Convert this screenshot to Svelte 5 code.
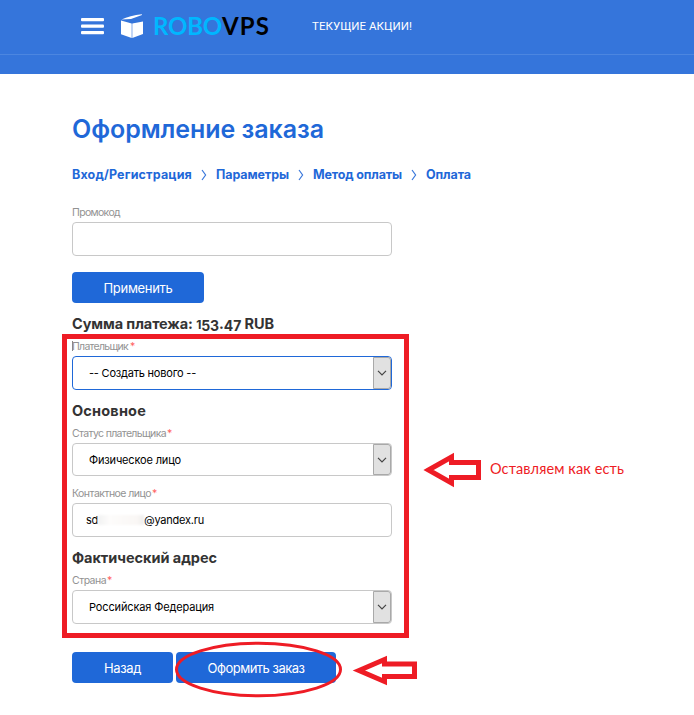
<script>
  // Spreads or tightens letters so a caption occupies its design width.
  function fit(node, width) {
    const gaps = node.textContent.length;
    const natural = node.getBoundingClientRect().width;
    node.style.letterSpacing = `${(width - natural) / gaps}px`;
  }
</script>

{#snippet select(text, width, active, height)}
  <div class="field select" class:active style:height="{height}px">
    <span class="value" use:fit={width}>{text}</span>
    <span class="drop">
      <svg width="10" height="6" viewBox="0 0 10 6"><path d="M1 .8 5 4.8 9 .8" fill="none" stroke="#444" stroke-width="1.2" /></svg>
    </span>
  </div>
{/snippet}

{#snippet label(text, width, gap)}
  <div class="label"><span use:fit={width}>{text}</span><b style:margin-left="{gap}px">*</b></div>
{/snippet}

{#snippet chevron()}
  <svg class="sep" width="6" height="12" viewBox="0 0 6 12"><path d="M1 1 4.6 6 1 11" fill="none" stroke="#3977db" stroke-width="1.2" /></svg>
{/snippet}

<div class="page">
  <header>
    <div class="bar">
      <svg class="burger" width="23" height="17" viewBox="0 0 23 17" fill="#fff">
        <rect y="0" width="23" height="3.2" rx="1" /><rect y="6.5" width="23" height="3.2" rx="1" /><rect y="13" width="23" height="3.2" rx="1" />
      </svg>
      <svg class="cube" width="22" height="25" viewBox="0 0 22 25" fill="#fff">
        <path d="M0 6.5 10.7 9.5V24L0 20.300ZM11.300 9.500 22 7.500V20L11.300 24ZM.5 5.500C6 3 13 .8 20.800.2L21 1 10 5Z" />
      </svg>
      <div class="logo"><span use:fit={69}>ROBO</span><span class="dark" use:fit={48}>VPS</span></div>
      <span class="promo" use:fit={100}>ТЕКУЩИЕ АКЦИИ!</span>
    </div>
  </header>

  <main>
    <h1><span use:fit={252}>Оформление заказа</span></h1>
    <nav>
      <span use:fit={120}>Вход/Регистрация</span>{@render chevron()}
      <span use:fit={73}>Параметры</span>{@render chevron()}
      <span use:fit={89}>Метод оплаты</span>{@render chevron()}
      <span use:fit={45}>Оплата</span>
    </nav>
    <div class="label"><span use:fit={48}>Промокод</span></div>
    <div class="field"></div>
    <button class="apply"><span use:fit={69}>Применить</span></button>
    <h2><span use:fit={202}>Сумма платежа: <span class="one">1</span><i>53</i>.<i>47</i> RUB</span></h2>

    <div class="group payer">
      {@render label('Плательщик', 56, 2)}
      {@render select('-- Создать нового --', 107, true, 34)}
    </div>
    <h2><span use:fit={74}>Основное</span></h2>
    <div class="group status">
      {@render label('Статус плательщика', 94, 1)}
      {@render select('Физическое лицо', 92, false, 33)}
    </div>
    <div class="group contact">
      {@render label('Контактное лицо', 79, 1)}
      <div class="field mail"><span use:fit={12}>sd</span><span class="smudge"></span><span use:fit={60}>@yandex.ru</span></div>
    </div>
    <h2 class="address"><span use:fit={145}>Фактический адрес</span></h2>
    <div class="group">
      {@render label('Страна', 34, 1)}
      {@render select('Российская Федерация', 125, false, 34)}
    </div>
    <div class="actions">
      <button class="back"><span use:fit={37}>Назад</span></button>
      <button class="order"><span use:fit={97}>Оформить заказ</span></button>
    </div>
  </main>

  <svg class="marks" width="694" height="715" viewBox="0 0 694 715" fill="none" stroke="#ee1c25">
    <rect x="64.5" y="336.5" width="342" height="299" stroke-width="5" />
    <path d="M72.5 341V351" stroke="#888" stroke-width="1" />
    <ellipse cx="258.5" cy="669.5" rx="82" ry="26.3" stroke-width="3" />
    <path d="M428.500 470 451.500 457V462.500H478.500V477.500H451.500V483Z" stroke-width="5" />
    <path d="M359 670.500 384.500 659.500V664H414.500V676.500H384.500V681.500Z" stroke-width="5" />
  </svg>
  <div class="note"><span use:fit={134}>Оставляем как есть</span></div>
</div>

<style>
  :global(body) { margin: 0; background: #fff; }
  .page { position: relative; width: 694px; height: 715px; overflow: hidden; font-family: Inter, "Open Sans", sans-serif; }
  span { white-space: nowrap; }
  header { height: 74px; background: #3575db; }
  .bar { box-sizing: border-box; height: 55px; border-bottom: 1px solid #4c86e0; display: flex; padding-left: 81px; }
  .burger { margin-top: 18px; }
  .cube { margin: 14px 0 0 17px; }
  .logo { width: 158px; margin-left: 10px; display: flex; font: 700 24px/51px Lato, sans-serif; color: #00b7ff; }
  .dark { color: #000; }
  .promo { margin-left: 1px; font: 11.500px/52px Roboto, sans-serif; color: #fff; }
  main { padding-left: 72px; width: 320px; }
  h1 { margin: 0; padding-top: 36px; height: 56px; font: 600 25px/38px Inter, sans-serif; color: #1f68d8; }
  nav { display: flex; align-items: center; height: 18px; width: 410px; color: #1f68d8; font: 700 12.500px/18px Inter, sans-serif; }
  .sep { margin: 0 9px; flex: none; }
  .label { height: 16px; font: 10.500px/13px Inter, sans-serif; color: #929292; display: flex; }
  nav + .label { margin-top: 22px; }
  .label b { color: #ff6262; font-weight: 400; }
  .field { box-sizing: border-box; width: 320px; height: 34px; border: 1px solid #c8c8c8; border-radius: 4px; background: #fff; }
  .select { display: flex; justify-content: space-between; padding-left: 16px; }
  .active { border-color: #1f68d8; }
  .value { font: 11px/32px Inter, sans-serif; color: #000; }
  .drop { box-sizing: border-box; width: 18px; border: 1px solid #a9a9a9; background: #e1e1e1; border-radius: 0 3px 3px 0; display: flex; align-items: center; justify-content: center; }
  button { border: 0; padding: 0; height: 31px; border-radius: 4px; background: #1f68d8; color: #fff; font: 13px/30px Inter, sans-serif; }
  .apply { display: block; width: 132px; margin-top: 16px; }
  h2 { margin: 11px 0 0; height: 26px; font: 700 14.500px/20px Inter, sans-serif; color: #333; }
  .one { font-size: 12px; }
  i { font-style: normal; font-size: 14px; position: relative; top: 2px; }
  .payer { margin-top: 0; }
  .group + h2 { margin-top: 11px; height: 26px; }
  .contact { margin-top: 11px; }
  .mail { display: flex; align-items: center; padding-left: 13px; font-size: 11px; color: #000; }
  .smudge { width: 46px; height: 10px; background: linear-gradient(90deg, #f2f2f2, #fdfcfb 25%, #faf7f5 85%, #eee); filter: blur(1px); }
  .actions { display: flex; gap: 3px; margin-top: 28px; }
  .back { width: 101px; }
  .order { width: 160px; }
  .marks { position: absolute; left: 0; top: 0; }
  .note { position: absolute; left: 490px; top: 459px; font: 14.500px/20px Lato, sans-serif; color: #ee1c25; }
</style>
